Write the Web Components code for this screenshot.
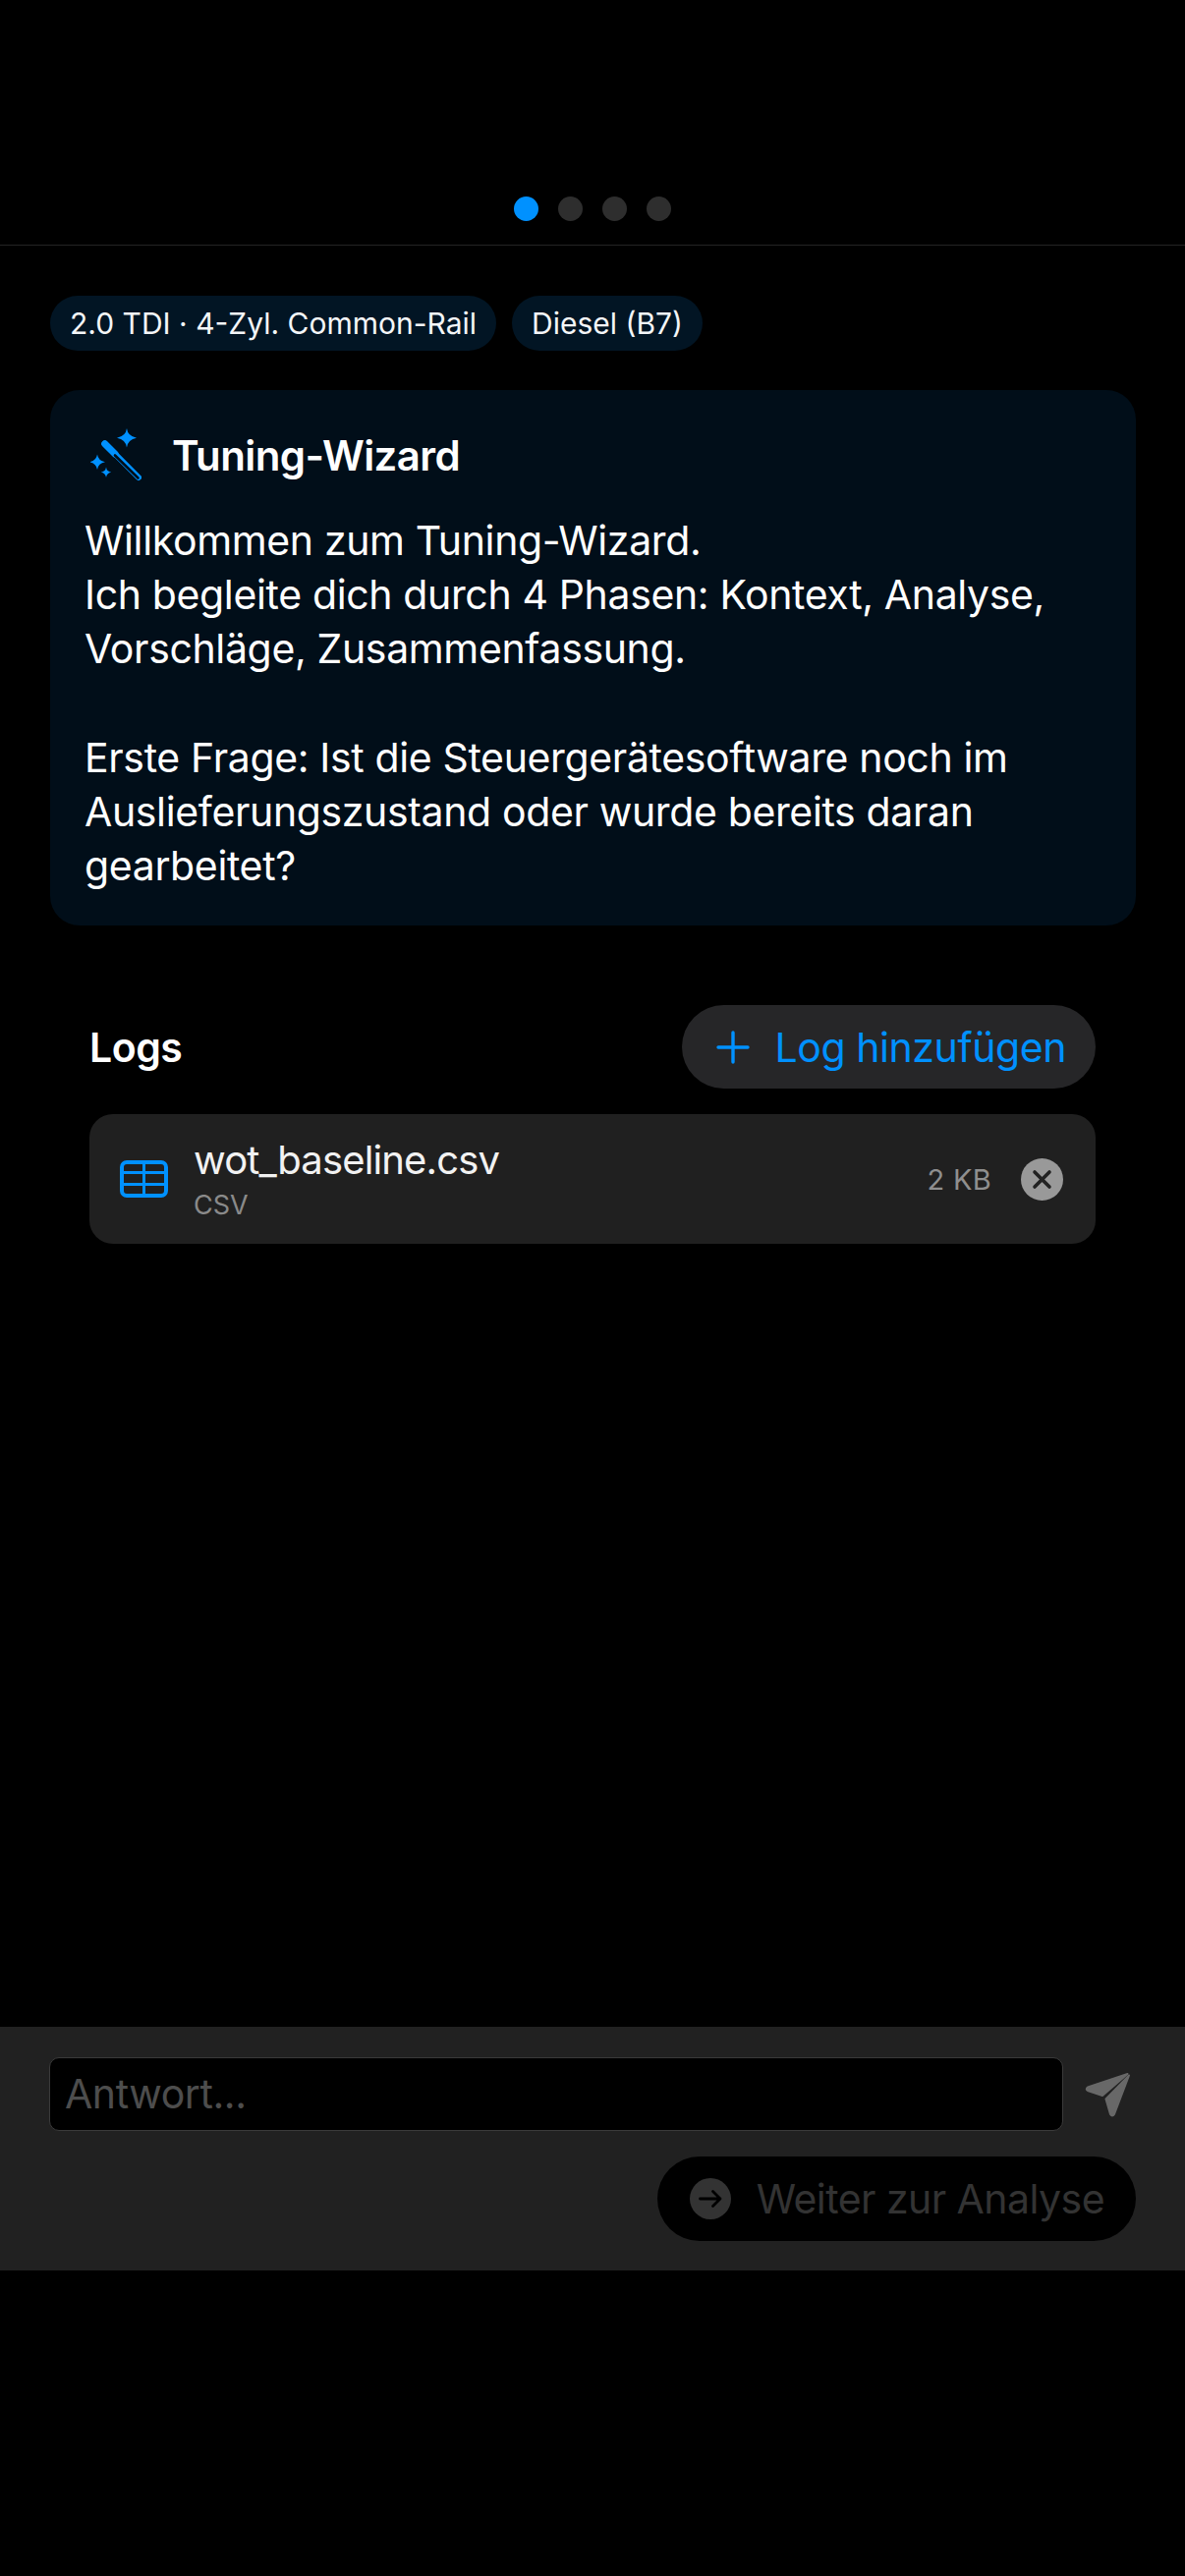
<!DOCTYPE html>
<html lang="de">
<head>
<meta charset="utf-8">
<title>Tuning-Wizard</title>
<style>
  html, body { margin: 0; background: #000; }
  body { font-family: Inter, "Liberation Sans", sans-serif; color: #fff; }
</style>
</head>
<body>
<wizard-page>
  <step-dots slot="head"></step-dots>
  <info-chip>2.0 TDI · 4-Zyl. Common-Rail</info-chip>
  <info-chip>Diesel (B7)</info-chip>
  <wizard-card slot="card" heading="Tuning-Wizard">Willkommen zum Tuning-Wizard.
Ich begleite dich durch 4 Phasen: Kontext, Analyse, Vorschläge, Zusammenfassung.

Erste Frage: Ist die Steuergerätesoftware noch im Auslieferungszustand oder wurde bereits daran gearbeitet?</wizard-card>
  <log-list slot="logs">
    <log-row name="wot_baseline.csv" kind="CSV" size="2 KB"></log-row>
  </log-list>
  <answer-bar slot="bar"></answer-bar>
</wizard-page>

<script>
class WizardPage extends HTMLElement {
  constructor() {
    super();
    const root = this.attachShadow({mode: 'open'});
    root.innerHTML = `
    <style>
      :host { display: flex; flex-direction: column; width: 1206px; height: 2622px; background: #000; }
      .head { border-bottom: 1px solid #232323; padding: 200px 0 24px; }
      main { flex: 1; padding: 51px 50px 0 51px; }
      .chips { display: flex; gap: 16px; margin-bottom: 40px; }
      .logs { padding: 81px 41px 0 40px; }
      .foot { height: 311px; }
    </style>
    <div class="head"><slot name="head"></slot></div>
    <main>
      <div class="chips"><slot></slot></div>
      <slot name="card"></slot>
      <div class="logs"><slot name="logs"></slot></div>
    </main>
    <slot name="bar"></slot>
    <div class="foot"></div>`;
  }
}

class StepDots extends HTMLElement {
  constructor() {
    super();
    const root = this.attachShadow({mode: 'open'});
    root.innerHTML = `
    <style>
      :host { display: flex; justify-content: center; gap: 20px; }
      i { width: 25px; height: 25px; border-radius: 50%; background: #2e2e2e; }
      i:first-of-type { background: #0091ff; }
    </style>
    <i></i><i></i><i></i><i></i>`;
  }
}

class InfoChip extends HTMLElement {
  constructor() {
    super();
    const root = this.attachShadow({mode: 'open'});
    root.innerHTML = `
    <style>
      :host { display: flex; align-items: center; height: 56px; padding: 0 20px; border-radius: 28px;
        background: #021524; font-size: 30px; color: #f4f6f8; white-space: nowrap; }
    </style>
    <slot></slot>`;
  }
}

class WizardCard extends HTMLElement {
  constructor() {
    super();
    const root = this.attachShadow({mode: 'open'});
    root.innerHTML = `
    <style>
      :host { display: block; height: 545px; box-sizing: border-box; padding: 39px 36px 0; border-radius: 30px; background: #010e19; }
      .title { display: flex; align-items: center; gap: 31px; height: 54px; padding-left: 5px; margin-bottom: 33px;
        font-size: 42px; font-weight: 600; letter-spacing: -0.6px; }
      svg { flex: none; }
      .text { font-size: 41px; line-height: 55.2px; letter-spacing: -0.36px; white-space: pre-line; margin-left: -1px; }
    </style>
    <div class="title">
      <svg width="52" height="54" viewBox="0 0 52 54">
        <line x1="14.7" y1="15.7" x2="49" y2="50" stroke="#0091ff" stroke-width="6" stroke-linecap="round"/>
        <line x1="14.7" y1="15.7" x2="25" y2="26" stroke="#0091ff" stroke-width="7" stroke-linecap="round"/>
        <line x1="25" y1="27.5" x2="48.5" y2="50.5" stroke="#010e19" stroke-width="2.6" stroke-linecap="round"/>
        <path fill="#0091ff" d="M37 0 Q38 8 47 9.7 Q38 11.4 37 19.5 Q36 11.4 27 9.7 Q36 8 37 0Z"/>
        <path fill="#0091ff" d="M7 26.5 Q8 33 15 34.3 Q8 35.6 7 42 Q6 35.6 -1 34.3 Q6 33 7 26.5Z"/>
        <path fill="#0091ff" d="M16 39.5 Q16.6 44 21.2 44.7 Q16.6 45.4 16 50 Q15.4 45.4 10.8 44.7 Q15.4 44 16 39.5Z"/>
      </svg>
      <span></span>
    </div>
    <div class="text"><slot></slot></div>`;
    root.querySelector('span').textContent = this.getAttribute('heading');
  }
}

class LogList extends HTMLElement {
  constructor() {
    super();
    const root = this.attachShadow({mode: 'open'});
    root.innerHTML = `
    <style>
      :host { display: block; }
      header { display: flex; justify-content: space-between; align-items: center; margin-bottom: 26px; }
      h2 { margin: 0; font-size: 41px; font-weight: 600; letter-spacing: -0.5px; }
      button { display: flex; align-items: center; gap: 25px; height: 85px; padding: 0 30px 0 35px; border: 0; border-radius: 43px;
        background: #262628; color: #0091ff; font: inherit; font-size: 41px; letter-spacing: -0.42px; }
    </style>
    <header>
      <h2>Logs</h2>
      <button>
        <svg width="34" height="34" viewBox="0 0 34 34" fill="none" stroke="#0091ff" stroke-width="3.4" stroke-linecap="round"><path d="M17 2V32M2 17H32"/></svg>
        Log hinzufügen
      </button>
    </header>
    <slot></slot>`;
  }
}

class LogRow extends HTMLElement {
  constructor() {
    super();
    const root = this.attachShadow({mode: 'open'});
    root.innerHTML = `
    <style>
      :host { display: flex; align-items: center; height: 132px; padding: 0 33px 0 31px; border-radius: 24px; background: #202020; }
      .names { flex: 1; margin-left: 26px; }
      .name { font-size: 40px; line-height: 48px; letter-spacing: -0.85px; color: #f2f2f2; }
      .kind { font-size: 27px; line-height: 34px; margin-top: 5px; color: #8a8a8a; }
      .size { font-size: 29px; letter-spacing: 0.3px; color: #8f8f8f; margin-right: 30px; }
      .close { display: block; }
    </style>
    <svg width="49" height="38" viewBox="0 0 49 38" fill="none" stroke="#0091ff">
      <rect x="2" y="2" width="45" height="34" rx="5" stroke-width="4"/>
      <path d="M2 12.5H47M2 24.5H47M24.5 2V36" stroke-width="3"/>
    </svg>
    <div class="names"><div class="name"></div><div class="kind"></div></div>
    <div class="size"></div>
    <svg class="close" width="43" height="43" viewBox="0 0 43 43">
      <circle cx="21.5" cy="21.5" r="21.5" fill="#999"/>
      <path d="M14 14L29 29M29 14L14 29" stroke="#222" stroke-width="3.6" stroke-linecap="round"/>
    </svg>`;
    root.querySelector('.name').textContent = this.getAttribute('name');
    root.querySelector('.kind').textContent = this.getAttribute('kind');
    root.querySelector('.size').textContent = this.getAttribute('size');
  }
}

class AnswerBar extends HTMLElement {
  constructor() {
    super();
    const root = this.attachShadow({mode: 'open'});
    root.innerHTML = `
    <style>
      :host { display: flex; flex-direction: column; gap: 26px; height: 248px; box-sizing: border-box; padding: 31px 50px 0 50px; background: #212121; }
      .row { display: flex; align-items: center; }
      .field { flex: 1; height: 75px; box-sizing: border-box; display: flex; align-items: center; padding: 0 0 2px 15px; border: 1px solid #3a3a3a;
        border-radius: 10px; background: #000; font-size: 41px; letter-spacing: -0.42px; color: #4d4d4d; }
      .send { flex: none; margin-left: 22px; width: 52px; }
      .next { align-self: flex-end; display: flex; align-items: center; gap: 26px; height: 86px; padding: 0 32px 0 33px; border-radius: 43px;
        background: #000; font-size: 41px; letter-spacing: -0.55px; color: #333; }
    </style>
    <div class="row">
      <div class="field">Antwort...</div>
      <svg class="send" width="52" height="46" viewBox="0 0 46 46" preserveAspectRatio="xMinYMid" fill="#686868" stroke="#686868" stroke-width="2" stroke-linejoin="round">
        <path d="M43.5 2 L3 15.5 Q0.5 17.5 3 19 L18 24 Z"/>
        <path d="M45 3.5 L21.5 27.5 L26 43 Q28 46 30 43 Z"/>
      </svg>
    </div>
    <div class="next">
      <svg width="42" height="42" viewBox="0 0 42 42">
        <circle cx="21" cy="21" r="21" fill="#333"/>
        <path d="M10.5 21H31M23.5 13.5L31 21L23.5 28.5" fill="none" stroke="#000" stroke-width="2.8" stroke-linecap="round" stroke-linejoin="round"/>
      </svg>
      <span>Weiter zur Analyse</span>
    </div>`;
  }
}

customElements.define('wizard-page', WizardPage);
customElements.define('step-dots', StepDots);
customElements.define('info-chip', InfoChip);
customElements.define('wizard-card', WizardCard);
customElements.define('log-list', LogList);
customElements.define('log-row', LogRow);
customElements.define('answer-bar', AnswerBar);
</script>
</body>
</html>
